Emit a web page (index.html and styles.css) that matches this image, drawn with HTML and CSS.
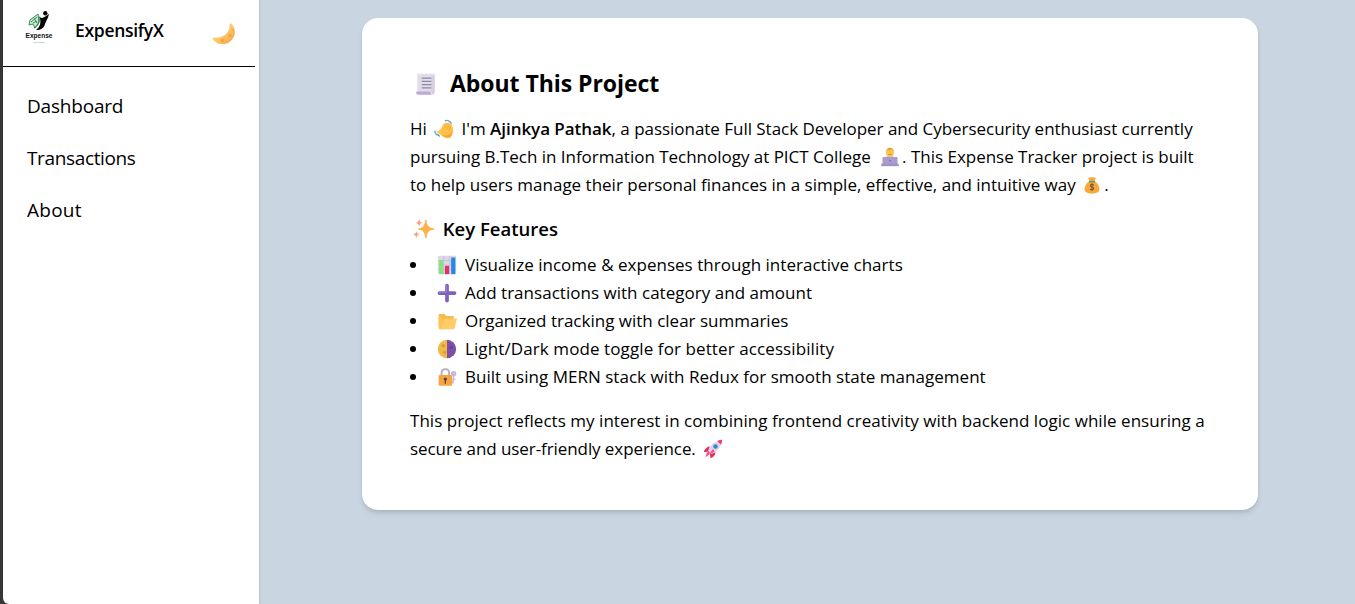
FILE: index.html
```html
<!DOCTYPE html>
<html lang="en">
<head>
<meta charset="utf-8">
<title>ExpensifyX</title>
<link rel="stylesheet" href="styles.css">
</head>
<body>
<div class="app">
  <aside class="sidebar">
    <header class="brand">
      <svg class="logo" viewBox="0 0 32 36">
        <path d="M7 12l8-6 1 8-4 6-2-4-4 1z" fill="#c9ead2" stroke="#319457" stroke-width="1"/>
        <path d="M8 14l6-5M11 10l3 5M10 15l4-2" stroke="#287746" stroke-width=".8"/>
        <circle cx="22.3" cy="5.3" r="2.2" fill="#050505"/>
        <path d="M16 8c2 3 4 2 7 0l3-2c-1 5-3 7-4 10-1 4-4 6-9 6 4-3 6-8 3-14z" fill="#050505"/>
        <path d="M11 20c4-2 6-6 5-11" fill="none" stroke="#267342" stroke-width="1"/>
        <text class="logo-name" x="2.5" y="29.8" textLength="27" lengthAdjust="spacingAndGlyphs">Expense</text>
        <text class="logo-sub" x="10.5" y="34.8" textLength="11">TRACKER</text>
      </svg>
      <span class="brand-name">ExpensifyX</span>
      <svg class="moon" viewBox="0 0 26 26">
        <defs><linearGradient id="moonFill" x1="0" y1="0" x2="1" y2="1"><stop offset="0" stop-color="#ffe18b"/><stop offset=".6" stop-color="#ffc160"/><stop offset="1" stop-color="#ed9c4c"/></linearGradient></defs>
        <path d="M18.500 2c5 4 6 11 2 16-5 7-15 7-20 0-.5-1 .2-1.500 1-1.300C11 17.500 18.500 12 17.500 3z" fill="url(#moonFill)"/>
        <g fill="#efa84e"><circle cx="10.500" cy="19.500" r="2"/><circle cx="18" cy="14.500" r="1.800"/><circle cx="20.500" cy="9" r="1"/><circle cx="15" cy="21" r=".8"/></g>
      </svg>
    </header>
    <nav class="nav"><a class="nav-dashboard">Dashboard</a><a class="nav-transactions">Transactions</a><a class="nav-about">About</a></nav>
  </aside>
  <main class="main">
    <article class="card">
      <h1 class="title"><svg class="emoji" viewBox="0 0 24 24">
        <path d="M4 2l2 1 2-1 2 1 2-1 2 1 2-1 2 1 2-1v18H4z" fill="#e3dceb"/><path d="M17 4h3v15c0 3-2 3-3 2z" fill="#d8cee3"/><path d="M3 19h13c0 2 1 3 3 3H5c-2 0-2-1-2-3z" fill="#bda9da"/><path d="M8 6.500h9M8 9.500h9M8 12.500h9M8 15.500h9" stroke="#91869f" stroke-width="1.100"/>
      </svg> <span>About This Project</span></h1>
      <p class="text">
        <span class="line l1">Hi <svg class="emoji" viewBox="0 0 24 24"><path d="M2 14l3 1 3-3 3-5c1-2 3-3 4-2 2-2 4-1 4 1 2-1 3 1 2.500 3l1 1c1 3 .5 7-1 10-2 4-7 4-11 1l-7-5z" fill="#ffc34a"/><path d="M10 19c5 2 9 0 12-5 0 8-5 10-12 6z" fill="#f0a63a"/><path d="M12 12l3-6M15 13l3-6M18 14l2-5" stroke="#e9a23a" stroke-width=".8"/><path d="M1 14c0 3 2 5 5 6M4 18l3 3M13 2.500c2-1.500 6-1 8 3" fill="none" stroke="#65a8d7" stroke-width="1.700"/></svg> I'm <b>Ajinkya Pathak</b>, a passionate Full Stack Developer and Cybersecurity enthusiast currently</span>
        <span class="line l2">pursuing B.Tech in Information Technology at PICT College <svg class="emoji" viewBox="0 0 24 24"><path d="M4 17c0-5 3-6 8-6s8 1 8 6z" fill="#8fb3d5"/><circle cx="12" cy="7" r="5" fill="#ffc64d"/><path d="M7 6c0-7 10-7 10 0l-2-3c-3 1-5 1-6 0z" fill="#e5a03c"/><path d="M10 9h4" stroke="#bd7839"/><rect x="3" y="12" width="18" height="9" rx="1" fill="#aa9ad0"/><path d="M1.500 20h21v3h-21z" fill="#a092c5"/><circle cx="12" cy="16.500" r="1" fill="#6f5b99"/></svg>. This Expense Tracker project is built</span>
        <span class="line l3">to help users manage their personal finances in a simple, effective, and intuitive way <svg class="emoji" viewBox="0 0 24 24"><path d="M9 7L7 3c2 1 3-1 5 0 2-1 3 1 5 0l-2 4c4 3 6 7 6 10 0 7-18 7-18 0 0-3 2-7 6-10z" fill="#f8a93c"/><path d="M8.500 8h7" stroke="#67967c" stroke-width="2"/><path d="M14.500 12c-2-1-4.500-1-4.500 1s4 1 4 3-2.500 2-4.500 1M12 10v9" fill="none" stroke="#765332" stroke-width="1.300"/></svg>.</span>
      </p>
      <h2 class="subtitle"><svg class="emoji" viewBox="0 0 24 24"><path d="M14 2c1 6 2 9 9 10-6 1-8 3-9 10-1-7-3-9-8-10 5-1 7-3 8-10z" fill="#ffb04b" stroke="#ffb04b" stroke-width="1" stroke-linejoin="round"/><path d="M7 1c0 3 1 4 3 4-2 1-3 2-3 4-1-2-2-3-4-4 2 0 3-1 4-4zM4 14c0 3 1 3 3 4-2 0-3 1-3 4-1-3-2-4-4-4 3-1 3-1 4-4z" fill="#ff987a"/></svg> <span>Key Features</span></h2>
      <ul class="features">
        <li><svg class="emoji" viewBox="0 0 24 24"><rect x="1" y="1" width="22" height="22" rx="1" fill="#ded7e9"/><path d="M1 7h22M1 12h22M1 17h22M8 1v22M15 1v22" stroke="#c7bed5"/><path d="M2.500 6h5v17h-5z" fill="#82e577"/><path d="M9.500 13h5v10h-5z" fill="#e72f64"/><path d="M17 3h5v20h-5z" fill="#238ae1"/></svg> <span class="f1">Visualize income &amp; expenses through interactive charts</span></li>
        <li><svg class="emoji" viewBox="0 0 24 24"><path d="M12 3v18M3 12h18" stroke="#7f62bd" stroke-width="4.500" stroke-linecap="round"/><path d="M11.500 2.500v8.500H2.500" fill="none" stroke="#a38ac9"/></svg> <span class="f2">Add transactions with category and amount</span></li>
        <li><svg class="emoji" viewBox="0 0 24 24"><path d="M2 5c0-1 1-1.500 2-1.500h5l2 2.500h9v13H2z" fill="#f7b84c"/><path d="M4 22h15c1.500 0 2-1 2.300-2L24 9H8L3 20z" fill="#ffcc68"/><path d="M2 7v13c0 2 1 2 3 2l4-12H6L5 7z" fill="#ffc35a"/></svg> <span class="f3">Organized tracking with clear summaries</span></li>
        <li><svg class="emoji" viewBox="0 0 24 24"><path d="M12 1a11 11 0 0 0 0 22z" fill="#f3b946"/><path d="M12 1a11 11 0 0 1 0 22z" fill="#7b4fa8"/><circle cx="7.500" cy="8" r="2" fill="#d59a36"/><circle cx="9" cy="16" r="2" fill="#d99d3a"/><circle cx="17" cy="10" r="2" fill="#6b408f"/></svg> <span class="f4">Light/Dark mode toggle for better accessibility</span></li>
        <li><svg class="emoji" viewBox="0 0 24 24"><path d="M5.500 12V7c0-6 9-6 9 0v5" fill="none" stroke="#b6aac4" stroke-width="2.200"/><circle cx="20" cy="8" r="2" fill="#d2c8e0" stroke="#c4b9d6" stroke-width="2.500"/><path d="M20 10l-1 10M19 15h3" stroke="#c4b9d6" stroke-width="2"/><rect x="2" y="9.500" width="16" height="13" rx="1.500" fill="#f6a43d"/><circle cx="10" cy="14.500" r="2" fill="#5b423e"/><path d="M10 15v5" stroke="#5b423e" stroke-width="1.500"/></svg> <span class="f5">Built using MERN stack with Redux for smooth state management</span></li>
      </ul>
      <p class="text">
        <span class="line l4">This project reflects my interest in combining frontend creativity with backend logic while ensuring a</span>
        <span class="line l5">secure and user-friendly experience. <svg class="emoji" viewBox="0 0 24 24"><path d="M8 9c-3 0-6 3-7 7l6-1zM15 16c0 3-2 6-6 7l-1-6z" fill="#df315b"/><path d="M6 14C9 7 14 2 22 2c0 8-5 13-12 16z" fill="#ddd4e8"/><path d="M17 2.500c2-1 4-1.500 6-1.500 0 2-.5 4-1.500 6z" fill="#f13d68"/><path d="M6 14l4 4-3 1-4 3 1-4zM12 12l-5 7 7-4z" fill="#fa4f85"/><circle cx="15" cy="9" r="2.700" fill="#3788c7"/></svg></span>
      </p>
    </article>
  </main>
</div>
</body>
</html>
```
FILE: styles.css
```css
* { box-sizing: border-box; }
body { margin: 0; background: #38383a; color: #000; font-family: "Open Sans", "Noto Sans", sans-serif; }
h1, h2, p, ul { margin: 0; padding: 0; }
.app { display: flex; height: 604px; padding-left: 3px; overflow: hidden; }
.sidebar { width: 256px; flex: none; background: #fff; border-bottom-left-radius: 6px; box-shadow: 0 0 3px rgba(0,0,0,.2); z-index: 1; padding-right: 4px; }
.brand { display: flex; align-items: center; height: 67px; border-bottom: 1px solid #000; padding: 0 17px 5px 20px; }
.logo { width: 32px; height: 36px; margin-top: -9px; }
.logo-name { font: 700 7px "Liberation Sans", sans-serif; fill: #111; }
.logo-sub { font: 700 2px "Liberation Sans", sans-serif; fill: #55a775; }
.brand-name { font-size: 17.500px; font-weight: 600; margin: -1px 0 0 20px; width: 90px; white-space: nowrap; letter-spacing: -.3px; }
.moon { width: 26px; height: 26px; margin-left: auto; margin-top: 6px; }
.nav { display: flex; flex-direction: column; gap: 24px; padding: 25px 24px; font-size: 19px; line-height: 28px; }
.nav-dashboard { letter-spacing: -.2px; }
.nav-transactions { letter-spacing: -.36px; }
.nav-about { letter-spacing: .25px; }
.main { flex: 1; background: #c9d5e1; padding: 18px 103px 0; }
.card { width: 896px; height: 492px; padding: 49px 48px 47px; background: #fff; border-radius: 16px; box-shadow: 0 4px 6px -1px rgba(0,0,0,.12), 0 2px 4px -2px rgba(0,0,0,.12); }
.title { font-size: 23px; line-height: 32px; font-weight: 700; white-space: nowrap; margin-bottom: 16px; }
.title span { letter-spacing: -.05px; }
.subtitle { font-size: 18.500px; line-height: 28px; font-weight: 600; white-space: nowrap; margin: 16px 0 8px; }
.text, .features { font-size: 17px; line-height: 28px; }
.text b { font-weight: 600; }
.line { display: block; white-space: nowrap; }
.l1 { letter-spacing: -.03px; }
.l1 b { letter-spacing: -.04px; }
.l4 { letter-spacing: .04px; }
.l5 { letter-spacing: -.08px; }
.f1, .f2, .f5 { letter-spacing: .025px; }
.f4 { letter-spacing: .1px; }
.emoji { width: 20px; height: 20px; margin: 0 2px; vertical-align: -4px; }
.l1 .emoji { margin: 0 3px; }
.l2 .emoji { margin: 0 2px 0 5px; }
.l2 { letter-spacing: -.02px; }
.l5 .emoji { margin-left: 3px; }
.title .emoji { width: 26px; height: 26px; margin: 0 5px 0 3px; vertical-align: -5px; }
.subtitle .emoji { width: 22px; height: 22px; margin: 0 3px; vertical-align: -4px; }
.features { list-style: none; margin-bottom: 16px; }
.features li { display: flex; align-items: center; height: 28px; white-space: nowrap; }
.features li::before { content: ""; width: 6px; height: 6px; border-radius: 50%; background: #000; margin-right: 21px; }
.features .emoji { width: 20px; height: 20px; margin: 0 8px 0 0; }
```
